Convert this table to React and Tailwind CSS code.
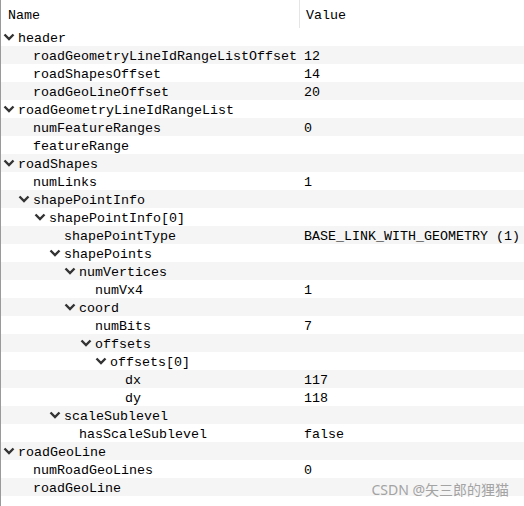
import React from "react";

const rows = [
  { name: "header", level: 0, open: true },
  { name: "roadGeometryLineIdRangeListOffset", level: 1, value: "12" },
  { name: "roadShapesOffset", level: 1, value: "14" },
  { name: "roadGeoLineOffset", level: 1, value: "20" },
  { name: "roadGeometryLineIdRangeList", level: 0, open: true },
  { name: "numFeatureRanges", level: 1, value: "0" },
  { name: "featureRange", level: 1 },
  { name: "roadShapes", level: 0, open: true },
  { name: "numLinks", level: 1, value: "1" },
  { name: "shapePointInfo", level: 1, open: true },
  { name: "shapePointInfo[0]", level: 2, open: true },
  { name: "shapePointType", level: 3, value: "BASE_LINK_WITH_GEOMETRY (1)" },
  { name: "shapePoints", level: 3, open: true },
  { name: "numVertices", level: 4, open: true },
  { name: "numVx4", level: 5, value: "1" },
  { name: "coord", level: 4, open: true },
  { name: "numBits", level: 5, value: "7" },
  { name: "offsets", level: 5, open: true },
  { name: "offsets[0]", level: 6, open: true },
  { name: "dx", level: 7, value: "117" },
  { name: "dy", level: 7, value: "118" },
  { name: "scaleSublevel", level: 3, open: true },
  { name: "hasScaleSublevel", level: 4, value: "false" },
  { name: "roadGeoLine", level: 0, open: true },
  { name: "numRoadGeoLines", level: 1, value: "0" },
  { name: "roadGeoLine", level: 1 },
];

const Chevron = () => (
  <svg width="12" height="8" viewBox="0 0 12 8" className="shrink-0">
    <path d="M1.5 1.5 L6 6 L10.5 1.5" fill="none" stroke="#333" strokeWidth="2.4" />
  </svg>
);

export default function App() {
  return (
    <div
      className="relative w-[524px] h-[506px] bg-white border-l border-[#9a9a9a] text-black text-[13.33px] leading-none overflow-hidden"
      style={{ fontFamily: '"Liberation Mono", monospace' }}
    >
      <div className="flex h-[28px]">
        <div className="w-[299px] border-r border-[#e5e5e5] flex items-center pl-[7px] pt-[4px]">Name</div>
        <div className="flex items-center pl-[6px] pt-[4px]">Value</div>
      </div>
      {rows.map((r, i) => (
        <div
          key={i}
          className={`flex h-[18px] items-center pt-[3px] ${i % 2 === 1 ? "bg-[#f5f5f5]" : "bg-white"}`}
        >
          <div
            className="w-[303px] flex items-center whitespace-nowrap"
            style={{ paddingLeft: 1 + Math.round(r.level * 15.3) }}
          >
            <span className="w-[16px] flex items-center justify-start pl-[1px] -mt-[2px]">
              {r.open && <Chevron />}
            </span>
            <span>{r.name}</span>
          </div>
          <div className="whitespace-nowrap">{r.value}</div>
        </div>
      ))}
      <div
        className="absolute right-[15px] bottom-[9px] text-[14px] leading-none text-[#a3a3a3]"
        style={{ fontFamily: '"Noto Sans", "Noto Sans CJK SC", sans-serif' }}
      >
        CSDN @矢三郎的狸猫
      </div>
    </div>
  );
}
